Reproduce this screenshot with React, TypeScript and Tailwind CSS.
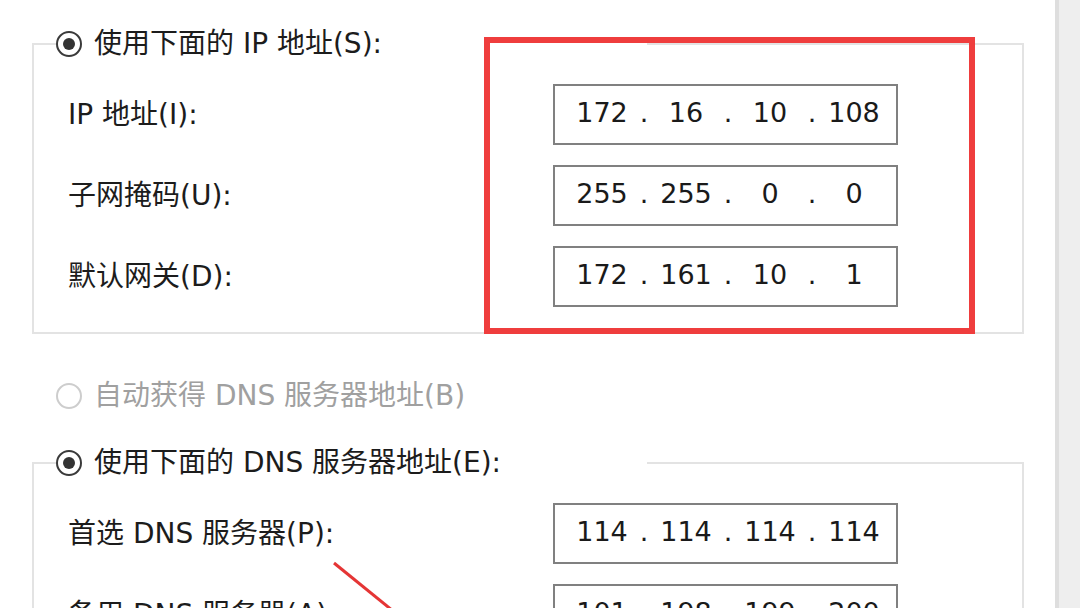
import React from 'react';

const font = { fontFamily: '"DejaVu Sans", "Noto Sans CJK SC", sans-serif' };

const Radio: React.FC<{ checked?: boolean; disabled?: boolean }> = ({ checked, disabled }) => (
  <span
    className={`flex items-center justify-center w-[26px] h-[26px] rounded-full border-2 bg-white shrink-0 ${
      disabled ? 'border-[#cdcdcd]' : 'border-[#3a3a3a]'
    }`}
  >
    {checked && <span className="w-[12px] h-[12px] rounded-full bg-[#333333]" />}
  </span>
);

const IpBox: React.FC<{ parts: string[] }> = ({ parts }) => (
  <div className="flex items-center h-[61px] w-[345px] border-2 border-[#808080] bg-white pl-[14px] pb-[5px] text-[27px] text-[#1a1a1a] leading-none">
    {parts.map((p, i) => (
      <React.Fragment key={i}>
        {i > 0 && <span className="w-[18px] text-center">.</span>}
        <span className="w-[66px] text-center">{p}</span>
      </React.Fragment>
    ))}
  </div>
);

const Row: React.FC<{ label: string; parts: string[] }> = ({ label, parts }) => (
  <div className="grid grid-cols-[485px_345px] items-center">
    <span className="text-[28px] text-[#1c1c1c] leading-none">{label}</span>
    <IpBox parts={parts} />
  </div>
);

const Group: React.FC<{ title: string; rows: { label: string; parts: string[] }[]; className?: string }> = ({
  title,
  rows,
  className,
}) => (
  <fieldset className={`border-2 border-[#e3e3e3] ${className ?? ''}`}>
    <legend className="ml-[22px] w-[591px] h-[40px] bg-white">
      <div className="flex items-center h-[40px] gap-[12px]">
        <Radio checked />
        <span className="text-[28px] text-[#1c1c1c] leading-none">{title}</span>
      </div>
    </legend>
    <div className="flex flex-col gap-[20px] pl-[34px] pt-[20px] pb-[25px]">
      {rows.map((r) => (
        <Row key={r.label} label={r.label} parts={r.parts} />
      ))}
    </div>
  </fieldset>
);

const App: React.FC = () => {
  return (
    <div className="relative flex w-[1080px] h-[608px] overflow-hidden bg-white" style={font}>
      {/* Dialog body */}
      <div className="w-[1055px] pl-[32px] pr-[31px] pt-[24px]">
        <Group
          title="使用下面的 IP 地址(S):"
          rows={[
            { label: 'IP 地址(I):', parts: ['172', '16', '10', '108'] },
            { label: '子网掩码(U):', parts: ['255', '255', '0', '0'] },
            { label: '默认网关(D):', parts: ['172', '161', '10', '1'] },
          ]}
        />

        <div className="flex items-center h-[40px] mt-[42px] ml-[24px] gap-[12px]">
          <Radio disabled />
          <span className="text-[28px] text-[#a0a0a0] leading-none">自动获得 DNS 服务器地址(B)</span>
        </div>

        <Group
          className="mt-[27px]"
          title="使用下面的 DNS 服务器地址(E):"
          rows={[
            { label: '首选 DNS 服务器(P):', parts: ['114', '114', '114', '114'] },
            { label: '备用 DNS 服务器(A):', parts: ['101', '198', '199', '200'] },
          ]}
        />
      </div>

      {/* Scrollbar strip */}
      <div className="flex-1 bg-[#eeeeee] border-l-4 border-[#dedede]" />

      {/* Red annotation box */}
      <div className="absolute left-[484px] top-[37px] w-[491px] h-[297px] border-[6px] border-[#ef3d3d]" />

      {/* Red annotation arrow */}
      <svg className="absolute left-0 top-0" width="1080" height="608">
        <line x1="334" y1="563" x2="398" y2="615" stroke="#e53535" strokeWidth="3" />
      </svg>
    </div>
  );
};

export default App;
